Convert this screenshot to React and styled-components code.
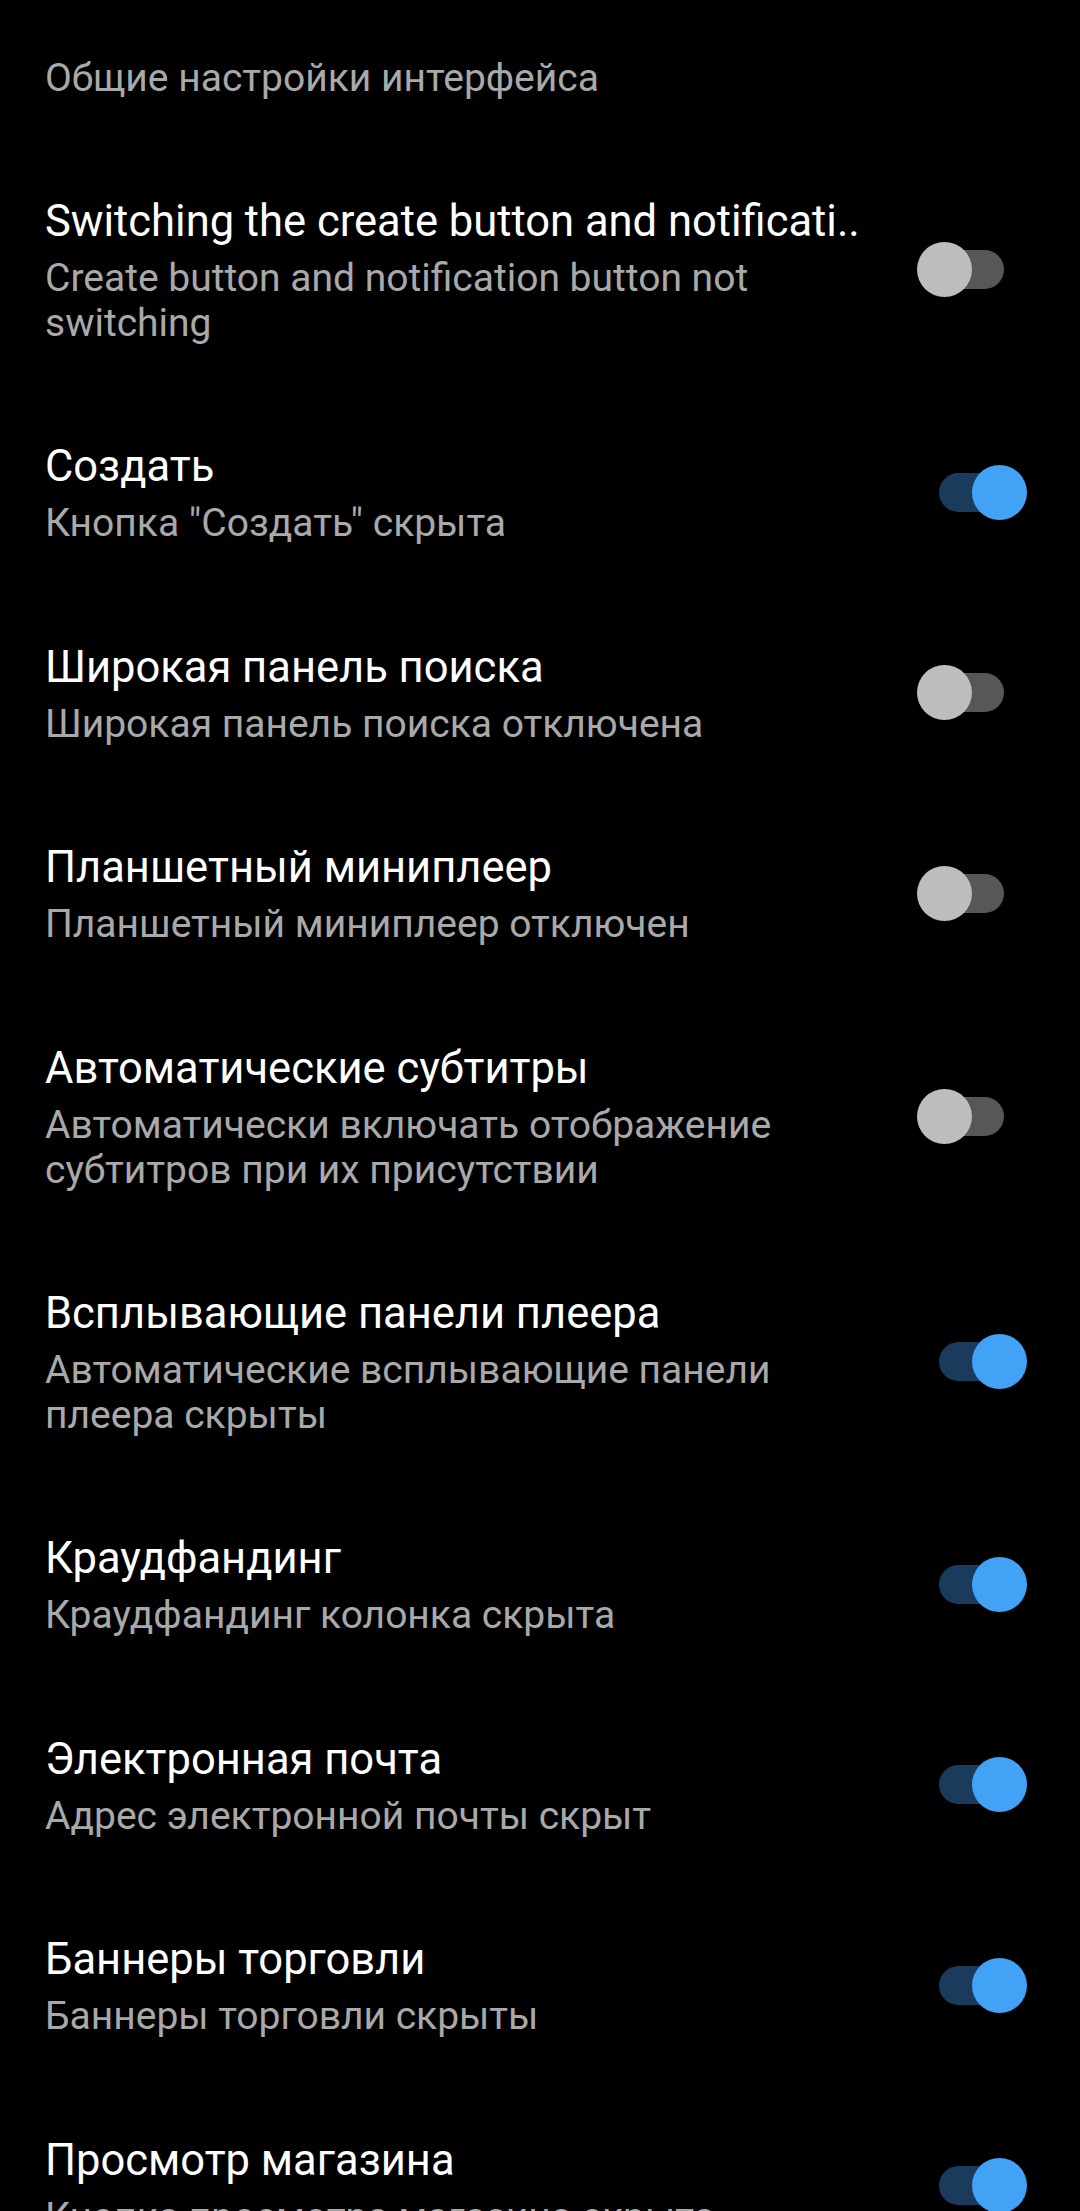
import React, { useState } from 'react';
import styled, { createGlobalStyle } from 'styled-components';

const settings = [
  {
    id: 'switch-create',
    title: 'Switching the create button and notificati..',
    subtitle: 'Create button and notification button not switching',
    on: false,
  },
  { id: 'create', title: 'Создать', subtitle: 'Кнопка "Создать" скрыта', on: true },
  {
    id: 'wide-search',
    title: 'Широкая панель поиска',
    subtitle: 'Широкая панель поиска отключена',
    on: false,
  },
  {
    id: 'tablet-mini',
    title: 'Планшетный миниплеер',
    subtitle: 'Планшетный миниплеер отключен',
    on: false,
  },
  {
    id: 'auto-captions',
    title: 'Автоматические субтитры',
    subtitle: 'Автоматически включать отображение субтитров при их присутствии',
    on: false,
  },
  {
    id: 'player-popups',
    title: 'Всплывающие панели плеера',
    subtitle: 'Автоматические всплывающие панели плеера скрыты',
    on: true,
  },
  {
    id: 'crowdfunding',
    title: 'Краудфандинг',
    subtitle: 'Краудфандинг колонка скрыта',
    on: true,
  },
  {
    id: 'email',
    title: 'Электронная почта',
    subtitle: 'Адрес электронной почты скрыт',
    on: true,
  },
  {
    id: 'merch',
    title: 'Баннеры торговли',
    subtitle: 'Баннеры торговли скрыты',
    on: true,
  },
  {
    id: 'store',
    title: 'Просмотр магазина',
    subtitle: 'Кнопка просмотра магазина скрыта',
    on: true,
  },
];

const App = () => {
  const [values, setValues] = useState(
    Object.fromEntries(settings.map((s) => [s.id, s.on]))
  );

  const toggle = (id) => setValues((v) => ({ ...v, [id]: !v[id] }));

  return (
    <Screen>
      <GlobalStyle />
      <SectionHeader>Общие настройки интерфейса</SectionHeader>
      {settings.map((s) => (
        <Row key={s.id} onClick={() => toggle(s.id)}>
          <TextBlock>
            <Title>{s.title}</Title>
            <Subtitle>{s.subtitle}</Subtitle>
          </TextBlock>
          <Switch $on={values[s.id]}>
            <Track $on={values[s.id]} />
            <Thumb $on={values[s.id]} />
          </Switch>
        </Row>
      ))}
    </Screen>
  );
};

const GlobalStyle = createGlobalStyle`
  html, body {
    margin: 0;
    padding: 0;
    background: #000;
  }
  body {
    font-family: Roboto, "Noto Sans", "Liberation Sans", sans-serif;
    -webkit-font-smoothing: antialiased;
  }
`;

const Screen = styled.div`
  display: flex;
  flex-direction: column;
  height: 2211px;
  background: #000;
  overflow: hidden;
`;

const SectionHeader = styled.div`
  flex: none;
  padding: 55px 45px 48px;
  font-size: 39px;
  line-height: 46px;
  color: #a9a9a9;
`;

const Row = styled.div`
  flex: none;
  display: flex;
  align-items: center;
  gap: 40px;
  padding: 48px 53px 48.4px 45px;
  cursor: pointer;
`;

const TextBlock = styled.div`
  flex: 1;
  min-width: 0;
  display: flex;
  flex-direction: column;
`;

const Title = styled.div`
  font-size: 43.5px;
  line-height: 50px;
  color: #ffffff;
  white-space: nowrap;
`;

const Subtitle = styled.div`
  margin-top: 9px;
  font-size: 39px;
  line-height: 45px;
  color: #a9a9a9;
`;

const Switch = styled.div`
  position: relative;
  flex: none;
  width: 110px;
  height: 55px;
  margin-top: -4px;
`;

const Track = styled.div`
  position: absolute;
  left: 22px;
  top: 8px;
  width: 65px;
  height: 39px;
  border-radius: 20px;
  background: ${(p) => (p.$on ? '#1a3b5b' : '#575757')};
`;

const Thumb = styled.div`
  position: absolute;
  top: 0;
  left: ${(p) => (p.$on ? '55px' : '0')};
  width: 55px;
  height: 55px;
  border-radius: 50%;
  background: ${(p) => (p.$on ? '#42a2f6' : '#bdbdbd')};
`;

export default App;
